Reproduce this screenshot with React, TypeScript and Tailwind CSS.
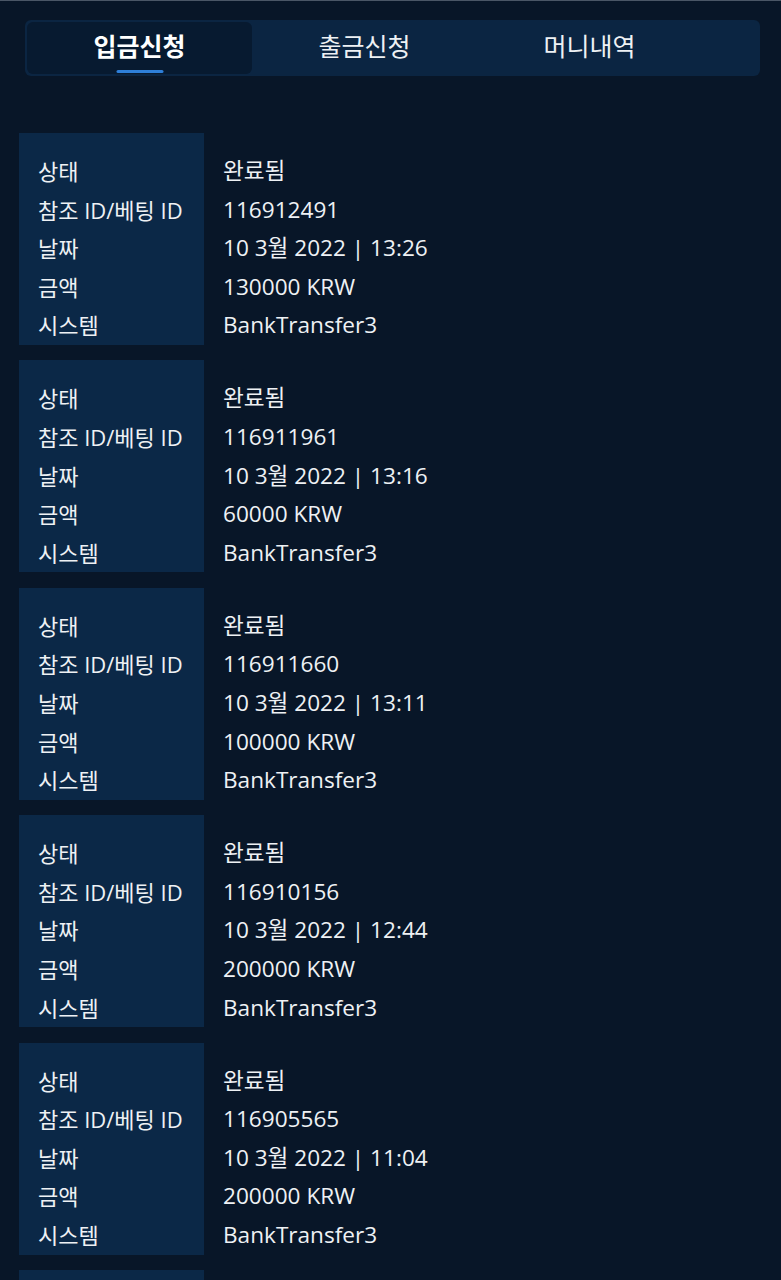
import { useState } from 'react'

const TABS = ['입금신청', '출금신청', '머니내역']

const RECORDS = [
  { id: '116912491', date: '10 3월 2022 | 13:26', amount: '130000 KRW' },
  { id: '116911961', date: '10 3월 2022 | 13:16', amount: '60000 KRW' },
  { id: '116911660', date: '10 3월 2022 | 13:11', amount: '100000 KRW' },
  { id: '116910156', date: '10 3월 2022 | 12:44', amount: '200000 KRW' },
  { id: '116905565', date: '10 3월 2022 | 11:04', amount: '200000 KRW' },
  { id: '116901230', date: '10 3월 2022 | 10:32', amount: '100000 KRW' },
]

const LABELS = ['상태', '참조 ID/베팅 ID', '날짜', '금액', '시스템']

export default function App() {
  const [activeTab, setActiveTab] = useState(0)

  return (
    <div
      className="h-[1280px] overflow-hidden bg-[#081628] border-t border-[#4a5666] text-[#eef1f4]"
      style={{ fontFamily: '"Open Sans", "Noto Sans CJK KR", sans-serif' }}
    >
      {/* Tabs */}
      <div className="ml-[25px] mr-[21px] mt-[19px] h-[56px] rounded-md bg-[#0b2542] p-[2px] flex">
        {TABS.map((tab, i) => (
          <button
            key={tab}
            onClick={() => setActiveTab(i)}
            className={`relative w-[225px] h-full rounded-md flex items-center justify-center text-[25px] ${
              activeTab === i ? 'bg-[#071a30] font-bold text-white' : 'text-[#eef1f4]'
            }`}
          >
            <span className="-mt-[2px]">{tab}</span>
            {activeTab === i && (
              <span className="absolute left-1/2 -translate-x-1/2 bottom-[1px] w-[47px] h-[3px] rounded-full bg-[#2e7fd8]" />
            )}
          </button>
        ))}
      </div>

      {/* Records */}
      <div className="mt-[57px] flex flex-col gap-[15.4px]">
        {RECORDS.map((r) => {
          const values = ['완료됨', r.id, r.date, r.amount, 'BankTransfer3']
          return (
            <div key={r.id} className="flex leading-[38.6px]">
              <div className="ml-[19px] w-[185px] h-[212px] shrink-0 bg-[#0b2847] pt-[19px] pl-[19px] text-[22px]">
                {LABELS.map((l) => (
                  <div key={l} className="whitespace-nowrap">{l}</div>
                ))}
              </div>
              <div className="pt-[19px] pl-[19px] text-[22.6px]">
                {values.map((v, i) => (
                  <div key={i} className="whitespace-nowrap">{v}</div>
                ))}
              </div>
            </div>
          )
        })}
      </div>
    </div>
  )
}
